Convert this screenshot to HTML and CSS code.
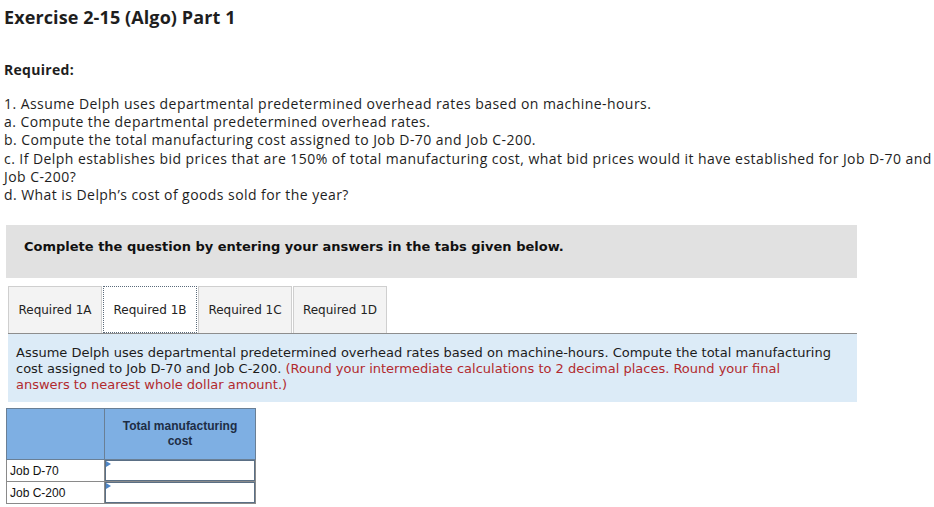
FILE: index.html
```html
<!DOCTYPE html>
<html>
<head>
<meta charset="utf-8">
<link rel="stylesheet" href="styles.css">
</head>
<body>
<h1 class="title">Exercise 2-15 (Algo) Part 1</h1>
<h2 class="req-head">Required:</h2>
<div class="req-list">
<p>1. Assume Delph uses departmental predetermined overhead rates based on machine-hours.</p>
<p>a. Compute the departmental predetermined overhead rates.</p>
<p>b. Compute the total manufacturing cost assigned to Job D-70 and Job C-200.</p>
<p><span class="nw">c. If Delph establishes bid prices that are 150% of total manufacturing cost, what bid prices would it have established for Job D-70 and</span><br>Job C-200?</p>
<p>d. What is Delph’s cost of goods sold for the year?</p>
</div>
<div class="instructions">Complete the question by entering your answers in the tabs given below.</div>
<div class="tabs">
  <div class="tab">Required 1A</div>
  <div class="tab active">Required 1B</div>
  <div class="tab">Required 1C</div>
  <div class="tab">Required 1D</div>
</div>
<div class="panel">Assume Delph uses departmental predetermined overhead rates based on machine-hours. Compute the total manufacturing cost assigned to Job D-70 and Job C-200. <span class="hint">(Round your intermediate calculations to 2 decimal places. Round your final answers to nearest whole dollar amount.)</span></div>
<table class="answers">
  <tr class="head"><th class="blank"></th><th class="col">Total manufacturing<br>cost</th></tr>
  <tr><td class="label">Job D-70</td><td class="input"><div class="box"></div></td></tr>
  <tr><td class="label">Job C-200</td><td class="input"><div class="box"></div></td></tr>
</table>
</body>
</html>
```
FILE: styles.css
```css
html, body { margin: 0; padding: 0; background: #fff; }
body { font-family: "Open Sans", "Lato", sans-serif; color: #222; }
.title { font-size: 18px; font-weight: 700; margin: 0; padding: 5px 0 0 4px; line-height: 24px; color: #1e1e1e; letter-spacing: 0.1px; }
.req-head { font-size: 14px; font-weight: 700; margin: 0; padding: 32px 0 0 4px; line-height: 18px; color: #1e1e1e; letter-spacing: 0.3px; }
.req-list { padding: 16px 0 0 4px; font-size: 14px; line-height: 18.2px; color: #1e1e1e; letter-spacing: 0.44px; }
.req-list p { margin: 0; }
.nw { white-space: nowrap; }
.instructions { margin: 21px 77px 0 6px; height: 53px; background: #e1e1e1; box-sizing: border-box; padding: 14px 0 0 18px; font-family: "DejaVu Sans", Verdana, sans-serif; font-weight: 700; font-size: 13px; color: #111; }
.tabs { display: flex; margin: 8px 0 0 8px; height: 47px; }
.tab { width: 94px; box-sizing: border-box; background: #f3f3f3; border: 1px solid #cfcfcf; border-bottom: none; display: flex; align-items: center; justify-content: center; font-family: "DejaVu Sans", Verdana, sans-serif; font-size: 12px; color: #222; margin-right: 1px; }
.tab.active { background: #fff; border: 1px dotted #5a6a7a; border-bottom: 1px dotted #5a6a7a; }
.panel { margin: 0 77px 0 8px; background: #dcebf7; border-top: 1px solid #8d8d8d; padding: 11px 24px 9px 8px; font-family: "DejaVu Sans", Verdana, sans-serif; font-size: 13px; line-height: 16px; color: #1c1c1c; }
.hint { color: #b22a2e; }
.answers { margin: 6px 0 0 6px; border-collapse: collapse; font-family: "Liberation Sans", Arial, sans-serif; font-size: 12px; }
.answers th { background: #7eafe3; border: 1px solid #6a7f95; vertical-align: top; font-weight: 700; color: #1d2d45; padding: 10px 0 0 0; height: 40px; line-height: 15px; }
.answers th.blank { width: 97px; }
.answers th.col { width: 150px; }
.answers td.label { border: 1px solid #8a8a8a; padding: 0 3px; height: 21px; color: #111; }
.answers td.input { padding: 0; border: 1px solid #8a8a8a; }
.box { position: relative; height: 19px; border: 1px solid #5a6f85; background: #fff; }
.box::before { content: ""; position: absolute; left: 0; top: 0; border-left: 5px solid #4f86c6; border-top: 3px solid transparent; border-bottom: 3px solid transparent; }
```
